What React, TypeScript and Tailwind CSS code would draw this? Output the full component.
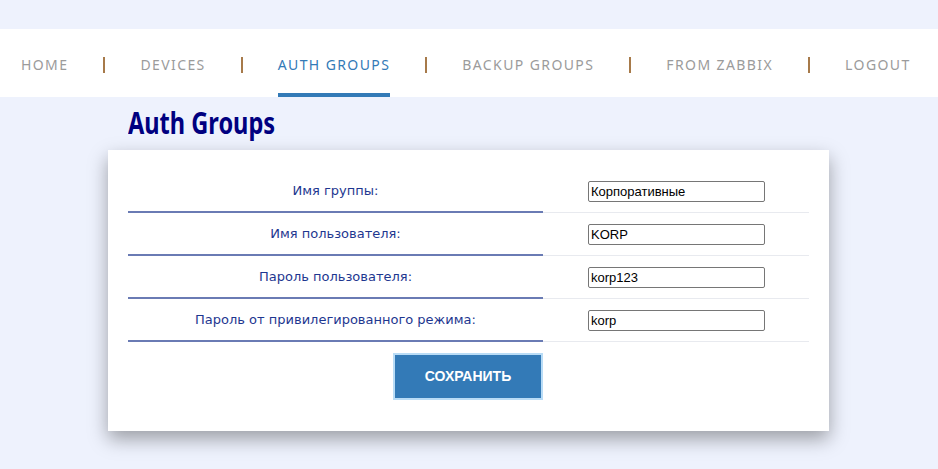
import React from "react";

const navItems = [
  { label: "HOME", active: false },
  { label: "DEVICES", active: false },
  { label: "AUTH GROUPS", active: true },
  { label: "BACKUP GROUPS", active: false },
  { label: "FROM ZABBIX", active: false },
  { label: "LOGOUT", active: false },
];

const rows = [
  { label: "Имя группы:", value: "Корпоративные" },
  { label: "Имя пользователя:", value: "KORP" },
  { label: "Пароль пользователя:", value: "korp123" },
  { label: "Пароль от привилегированного режима:", value: "korp" },
];

function TopNav() {
  return (
    <nav className="flex h-[68px] items-stretch gap-[35px] whitespace-nowrap bg-white pl-[21px] font-['Noto_Sans',sans-serif] text-[14px] tracking-[1.4px]">
      {navItems.map((item, i) => (
        <React.Fragment key={item.label}>
          {i > 0 && (
            <span className="flex items-center pt-1">
              <span className="h-[16px] w-[2px] bg-[#a77a4a]" />
            </span>
          )}
          <a
            className={
              item.active
                ? "flex items-center border-b-4 border-[#337ab7] pt-[6px] text-[#337ab7]"
                : "flex items-center border-b-4 border-transparent pt-[6px] text-[#9b9b9b]"
            }
          >
            {item.label}
          </a>
        </React.Fragment>
      ))}
    </nav>
  );
}

function FormRow({ label, value }: { label: string; value: string }) {
  return (
    <div className="flex h-[43px]">
      <div className="flex w-[415px] items-center justify-center border-b-2 border-[#6a7bb4] font-['DejaVu_Sans',Verdana,sans-serif] text-[13px] text-[#1e3790]">
        {label}
      </div>
      <div className="flex flex-1 items-center border-b border-[#e8eaef] pl-[45px]">
        <input
          defaultValue={value}
          className="h-[21px] w-[177px] rounded-[2px] border border-[#767676] px-[2px] text-[13px] text-black outline-none"
        />
      </div>
    </div>
  );
}

export default function App() {
  return (
    <div className="min-h-screen bg-[#eef2fd] pt-[29px] font-['Liberation_Sans',Arial,sans-serif]">
      <TopNav />
      <div className="ml-[128px] mt-[5px] h-[48px]">
        <h1 className="inline-block origin-left scale-x-[0.76] whitespace-nowrap font-['Noto_Sans',sans-serif] text-[31px] font-bold leading-[40px] text-[#000080]">
          Auth Groups
        </h1>
      </div>
      <div className="ml-[108px] w-[721px] bg-white px-[20px] pt-[20px] pb-[31px] shadow-[0_8px_18px_rgba(0,0,0,0.35)]">
        {rows.map((r) => (
          <FormRow key={r.label} label={r.label} value={r.value} />
        ))}
        <div className="flex pt-[11px]">
          <div className="w-[265px]" />
          <button className="h-[47px] w-[150px] border-2 border-[#b9dcf6] bg-[#337ab7] text-[14px] font-bold text-white">
            СОХРАНИТЬ
          </button>
        </div>
      </div>
    </div>
  );
}
